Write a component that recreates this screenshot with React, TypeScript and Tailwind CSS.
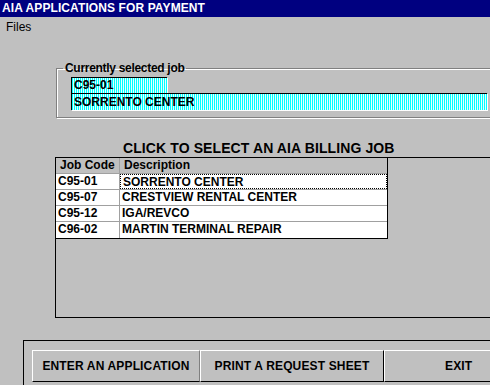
import React from "react";

const dither =
  "bg-[repeating-linear-gradient(90deg,#00ffff_0_1px,#e0ffff_1px_2px)]";

const rows = [
  ["C95-01", "SORRENTO CENTER"],
  ["C95-07", "CRESTVIEW RENTAL CENTER"],
  ["C95-12", "IGA/REVCO"],
  ["C96-02", "MARTIN TERMINAL REPAIR"],
];

export default function App() {
  return (
    <div
      className="w-[490px] h-[385px] bg-[#c0c0c0] overflow-hidden text-black"
      style={{ fontFamily: '"Liberation Sans", Arial, sans-serif' }}
    >
      {/* Title bar */}
      <div className="h-[17px] bg-[#000080] text-white font-bold text-[12px] leading-[17px] pl-[2px] tracking-[0.1px]">
        AIA APPLICATIONS FOR PAYMENT
      </div>
      {/* Menu */}
      <div className="h-[20px] text-[12px] leading-[20px] pl-[6px]">Files</div>

      {/* Group box */}
      <fieldset className="ml-[56px] mt-[25px] w-[460px] h-[56px] border border-[#808080] shadow-[inset_1px_1px_0_#ffffff,1px_1px_0_#ffffff] p-0">
        <legend className="ml-[6px] px-[2px] font-bold text-[12px] leading-[13px] tracking-[-0.3px]">
          Currently selected job
        </legend>
        <div className="flex flex-col mt-[2px] pl-[14px]">
          <div
            className={`w-[96px] h-[16px] border-t border-l border-black shadow-[1px_1px_0_#ffffff] ${dither} font-bold text-[12px] leading-[15px] pl-[2px]`}
          >
            C95-01
          </div>
          <div
            className={`w-[416px] h-[17px] border-t border-l border-black shadow-[1px_1px_0_#ffffff] ${dither} font-bold text-[12px] leading-[16px] pl-[2px]`}
          >
            SORRENTO CENTER
          </div>
        </div>
      </fieldset>

      {/* Grid caption */}
      <div className="ml-[123px] mt-[22px] h-[17px] font-bold text-[14px] leading-[17px] tracking-[0.1px]">
        CLICK TO SELECT AN AIA BILLING JOB
      </div>

      {/* Grid area */}
      <div className="ml-[55px] w-[450px] h-[161px] border-t border-l border-b border-black">
        <div className="w-[332px] border-r border-b border-black">
          <div className="flex h-[16px] border-b border-[#a0a0a0] font-bold text-[12px] leading-[15px]">
            <div className="w-[64px] border-r border-[#a0a0a0] pl-[4px]">Job Code</div>
            <div className="flex-1 pl-[4px]">Description</div>
          </div>
          {rows.map(([code, desc], i) => (
            <div
              key={code}
              className={`flex h-[16px] bg-white font-bold text-[12px] leading-[15px] ${
                i < rows.length - 1 ? "border-b border-[#a0a0a0]" : ""
              }`}
            >
              <div className="w-[64px] border-r border-[#a0a0a0] pl-[2px]">{code}</div>
              <div
                className={`flex-1 pl-[2px] ${
                  i === 0 ? "border border-dotted border-black" : ""
                }`}
              >
                {desc}
              </div>
            </div>
          ))}
        </div>
      </div>

      {/* Button panel */}
      <div className="ml-[23px] mt-[22px] w-[480px] h-[60px] border-t border-l border-black pl-[8px] pt-[9px]">
        <div className="flex h-[32px] font-bold text-[12px] tracking-[0.15px]">
          <button className="shrink-0 w-[168px] h-[32px] bg-[#c0c0c0] border-t border-l border-white border-r border-r-[#808080] border-b border-b-black flex items-center justify-center pb-[1px]">
            ENTER AN APPLICATION
          </button>
          <button className="shrink-0 w-[184px] h-[32px] bg-[#c0c0c0] border-t border-l border-white border-r border-r-black border-b border-b-black flex items-center justify-center pb-[1px]">
            PRINT A REQUEST SHEET
          </button>
          <button className="shrink-0 w-[160px] h-[32px] bg-[#c0c0c0] border-t border-l border-white border-b border-b-black flex items-center pl-[60px] pb-[1px]">
            EXIT
          </button>
        </div>
      </div>
    </div>
  );
}
